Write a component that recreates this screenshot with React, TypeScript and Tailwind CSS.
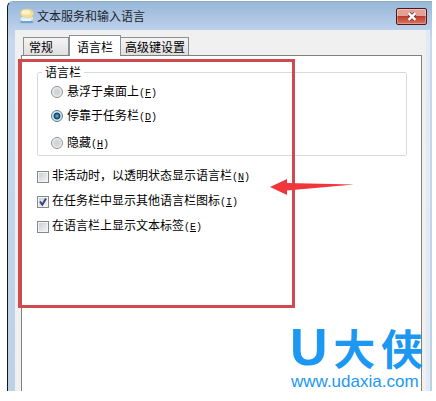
import React from 'react';

const modes = [
  { id: 'float', label: '悬浮于桌面上', hotkey: 'F', row: 'h-6' },
  { id: 'dock', label: '停靠于任务栏', hotkey: 'D', row: 'h-6' },
  { id: 'hidden', label: '隐藏', hotkey: 'H', row: 'mt-[3px] h-6' },
];

const options = [
  { id: 'transparent', label: '非活动时，以透明状态显示语言栏', hotkey: 'N', checked: false },
  { id: 'icons', label: '在任务栏中显示其他语言栏图标', hotkey: 'I', checked: true },
  { id: 'labels', label: '在语言栏上显示文本标签', hotkey: 'E', checked: false },
];

const Hotkey = ({ letter }: { letter: string }) => (
  <span className="font-['Liberation_Mono',monospace] text-[10px]">
    (<span className="underline">{letter}</span>)
  </span>
);

const WindowIcon = () => (
  <svg className="h-4 w-4 shrink-0" viewBox="0 0 16 16" aria-hidden="true">
    <path d="M3 8 .8 10.5V15h13.6v-4.5L12.5 8z" fill="#dceaf5" stroke="#9db9d2" strokeWidth=".8" />
    <path d="M1.5 12.6h12.3V15H1.5z" fill="#6fa3ce" />
    <path d="M3 11.4h9v1.6H3z" fill="#edf6fc" />
    <ellipse cx="8" cy="5.2" rx="6.6" ry="4.2" fill="#f6df9b" stroke="#e0c47c" strokeWidth=".5" />
    <path d="m9 8.6 5.4 2.2L13 7z" fill="#f3d98e" />
    <ellipse cx="7" cy="4.2" rx="4.2" ry="2.2" fill="#fff4cb" />
  </svg>
);

const App = () => {
  const [mode, setMode] = React.useState('dock');
  const tab = 'border border-b-0 border-[#8c8f94] text-left whitespace-nowrap';

  return (
    <div className="w-full bg-white pt-px pr-1 pb-2.5 pl-[7px] font-['Noto_Sans_CJK_SC',sans-serif] text-xs leading-4 text-black">
      <div className="rounded-tl-md border-t border-l border-t-[#8caccb] border-l-[#10181f] bg-linear-to-b from-[#9cbbdc] via-[#c8d9ef] via-10% to-[#bcd1e3]">
        <header className="flex h-7 items-center rounded-tl-md bg-linear-to-b from-[#98b7d9] to-[#bdd1eb] pr-[5px] pl-[11px]">
          <WindowIcon />
          <h1 className="grow pl-[2px] text-[#20262e]">文本服务和输入语言</h1>
          <button
            aria-label="关闭"
            className="flex h-[17px] w-[31px] items-center justify-center rounded-[2px] border border-[#4b1c1e] bg-linear-to-b from-[#e3a196] from-45% via-[#bd3c2d] via-50% to-[#d8755f] shadow-[inset_0_0_0_1px_rgba(255,255,255,0.3)]"
          >
            <svg className="h-[11px] w-3" viewBox="0 0 12 11" aria-hidden="true">
              <path d="m3 2.5 6 6m0-6-6 6" fill="none" stroke="#7a3a3a" strokeWidth="4" />
              <path d="m2.6 2.2 6.8 6.6m0-6.6L2.6 8.8" fill="none" stroke="#fff" strokeWidth="2.4" />
            </svg>
          </button>
        </header>

        <div className="pr-[2px] pl-[7px]">
          <div className="border-r-4 border-[#e0ebf4] bg-[#f0f0f0] pt-[5px] pr-1 pl-1.5">
            <nav className="relative -mb-px flex items-end pl-[2px]" role="tablist">
              <button role="tab" className={`${tab} h-[19px] w-[46px] bg-linear-to-b from-[#f4f4f4] to-[#dedede] pl-[5px]`}>常规</button>
              <button role="tab" aria-selected="true" className={`${tab} h-[21px] w-[52px] bg-white pl-[7px] leading-[17px]`}>语言栏</button>
              <button role="tab" className={`${tab} h-[19px] w-[68px] border-l-0 bg-linear-to-b from-[#f4f4f4] to-[#dedede] pl-1`}>高级键设置</button>
            </nav>

            <main className="relative border-x border-t border-[#808080] bg-white pt-2 pl-[15px]">
              {/* keeps the active tab open towards the page */}
              <div className="absolute -top-px left-[48px] h-px w-[50px] bg-white" />
              <fieldset className="mr-[14px] rounded-[2px] border border-[#d5dadf] pl-[13px]">
                <legend className="-ml-[9px] px-[3px]">语言栏</legend>
                {modes.map((m) => (
                  <label key={m.id} className={`flex items-center ${m.row}`}>
                    <input
                      type="radio"
                      name="mode"
                      checked={mode === m.id}
                      onChange={() => setMode(m.id)}
                      className="mr-1 h-3 w-3 shrink-0 appearance-none rounded-full border border-[#8b8f94] bg-[radial-gradient(circle,#d3d5d8_40%,#f5f5f5_70%)] checked:border-[#5b7b91] checked:bg-[radial-gradient(circle,#57bde6_0%,#12405e_42%,#d9e7ef_55%)]"
                    />
                    <span>{m.label}<Hotkey letter={m.hotkey} /></span>
                  </label>
                ))}
              </fieldset>

              <div className="pt-2">
                {options.map((o) => (
                  <label key={o.id} className="flex h-[25px] items-center">
                    <span className="mr-[3px] grid h-3 w-3 shrink-0">
                      <input
                        type="checkbox"
                        defaultChecked={o.checked}
                        className="peer col-start-1 row-start-1 h-3 w-3 appearance-none border border-[#85898d] bg-linear-to-br from-[#c8ccd0] to-[#f6f6f6] shadow-[inset_0_0_0_1px_#f4f4f4]"
                      />
                      <svg className="pointer-events-none invisible col-start-1 row-start-1 h-3 w-3 peer-checked:visible" viewBox="0 0 12 12" aria-hidden="true">
                        <path d="m3 5.5 2.3 3.2L9 2.5" fill="none" stroke="#34417f" strokeWidth="1.9" />
                      </svg>
                    </span>
                    <span>{o.label}<Hotkey letter={o.hotkey} /></span>
                  </label>
                ))}
              </div>

              <div className="relative -mr-[2px] mt-[82px] flex justify-end text-[#1c98f3]">
                <div className="w-[133px]">
                  <div className="flex h-[52px] items-center justify-between text-[42px] leading-[50px] font-bold">
                    <span className="font-['Liberation_Sans',sans-serif] text-[52px]">U</span>
                    <span>大</span>
                    <span>侠</span>
                  </div>
                  <a href="#home" className="block pl-px font-['Liberation_Sans',sans-serif] text-[17px] leading-[18px]">www.udaxia.com</a>
                </div>
              </div>

              {/* red callout frame and its arrow */}
              <div className="pointer-events-none absolute top-[3px] -left-1 h-[249px] w-[277px] border-3 border-l-4 border-[#cf4a4f]" />
              <svg className="pointer-events-none absolute top-[123px] left-[248px] h-4 w-[86px]" viewBox="0 0 86 16" aria-hidden="true">
                <path d="M0 8 17 0v4l67 1.5L17 11.5V16z" fill="#f0363b" />
              </svg>
            </main>
          </div>
        </div>
      </div>
    </div>
  );
};

export default App;
